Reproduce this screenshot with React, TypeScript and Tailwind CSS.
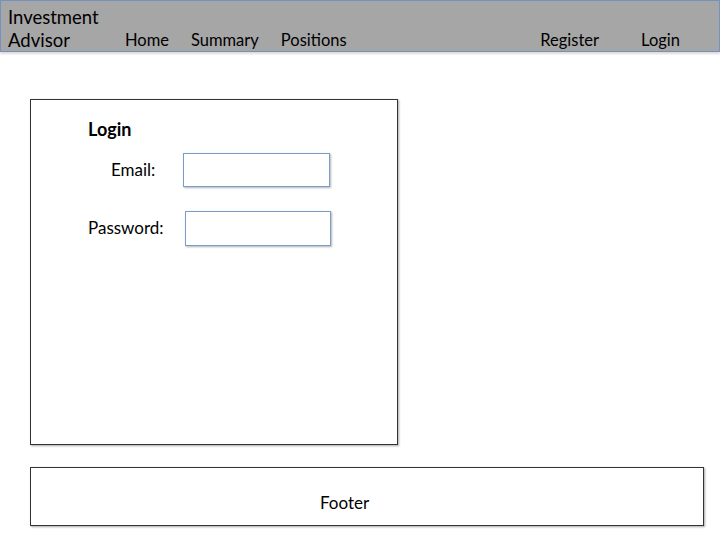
export default function App() {
  return (
    <div className="w-[720px] h-[540px] bg-white text-black font-['Lato',sans-serif] overflow-hidden">
      {/* Header */}
      <div className="h-[52px] bg-[#a6a6a6] border border-[#7592bf] shadow-[0_2px_2px_rgba(0,0,0,0.15)] flex items-end">
        <div className="w-[124px] pl-[7px] text-[18.5px] leading-[23px] -mb-[1px]">
          Investment
          <br />
          Advisor
        </div>
        <nav className="flex items-end text-[16.5px] leading-[22px]">
          <span>Home</span>
          <span className="ml-[22px]">Summary</span>
          <span className="ml-[22px]">Positions</span>
        </nav>
        <div className="flex-1" />
        <nav className="flex items-end text-[16.5px] leading-[22px] pr-[39px]">
          <span>Register</span>
          <span className="ml-[42px]">Login</span>
        </nav>
      </div>

      <div className="pl-[30px] pt-[47px]">
        {/* Login panel */}
        <div className="w-[368px] h-[346px] border border-[#333] shadow-[1px_1px_2px_rgba(0,0,0,0.35)] pt-[17px]">
          <div className="pl-[57px] text-[18px] leading-[24px] font-bold">Login</div>
          <div className="flex items-center mt-[12px]">
            <span className="pl-[80px] w-[152px] text-[17px]">Email:</span>
            <div className="w-[147px] h-[34px] border border-[#7a9cc9] shadow-[1px_1px_2px_rgba(0,0,0,0.3)]" />
          </div>
          <div className="flex items-center mt-[24px]">
            <span className="pl-[57px] w-[154px] text-[17px] -mt-[2px]">Password:</span>
            <div className="w-[146px] h-[35px] border border-[#7a9cc9] shadow-[1px_1px_2px_rgba(0,0,0,0.3)]" />
          </div>
        </div>

        {/* Footer */}
        <div className="mt-[22px] w-[674px] h-[59px] border border-[#333] shadow-[1px_1px_2px_rgba(0,0,0,0.35)] flex items-end pl-[289px] pb-[10px] text-[17px]">
          Footer
        </div>
      </div>
    </div>
  )
}
